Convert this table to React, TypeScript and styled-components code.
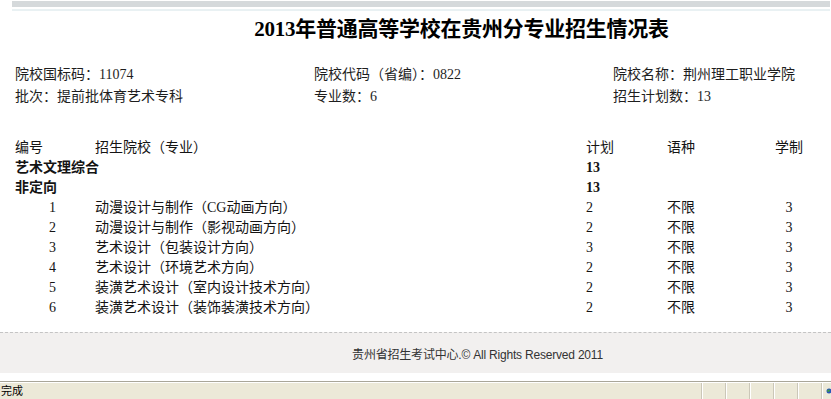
import React from "react";
import styled, { createGlobalStyle } from "styled-components";

const GlobalStyle = createGlobalStyle`
  html, body { margin: 0; padding: 0; background: #ffffff; overflow: hidden; }
  #root { width: 831px; height: 399px; }
`;

const Page = styled.div`
  width: 831px;
  height: 399px;
  display: flex;
  flex-direction: column;
  overflow: hidden;
  font-family: "Liberation Serif", "Noto Sans CJK SC", serif;
  color: #141414;
`;

const TopBar = styled.div`
  margin: 1px 1px 0 12px;
  height: 6px;
  background: #d5d9db;
`;

const TopLine = styled.div`
  margin: 2px 1px 0 12px;
  height: 2px;
  background: #e9f1f3;
`;

const Title = styled.h1`
  margin: 0;
  padding-left: 92px;
  height: 36px;
  line-height: 36px;
  text-align: center;
  font-size: 21px;
  font-weight: bold;
  font-family: "Liberation Serif", "Noto Sans CJK SC", serif;
  color: #000;
  letter-spacing: -0.25px;
`;

const InfoGrid = styled.div`
  margin-top: 17px;
  padding-left: 15px;
  display: grid;
  grid-template-columns: 299px 299px 1fr;
  grid-auto-rows: 22px;
  font-size: 14px;
  line-height: 22px;
  color: #1e1e1e;
`;

const Table = styled.div`
  margin-top: 30px;
  padding-left: 15px;
  display: grid;
  grid-template-columns: 80px 491px 81px 108px 28px;
  grid-auto-rows: 20px;
  font-size: 14px;
  line-height: 20px;
  color: #141414;
`;

const Cell = styled.div<{ $bold?: boolean; $align?: "left" | "center"; $pad?: number }>`
  white-space: nowrap;
  font-weight: ${(p) => (p.$bold ? "bold" : "normal")};
  text-align: ${(p) => p.$align ?? "left"};
  padding-left: ${(p) => p.$pad ?? 0}px;
`;

const Spacer = styled.div`
  flex: 0 0 14px;
`;

const Footer = styled.div`
  border-top: 1px dashed #c4c4c4;
  height: 40px;
  background: #f2f0ef;
  display: flex;
  align-items: center;
  justify-content: center;
  padding-left: 124px;
  font-family: "Liberation Sans", "Noto Sans CJK SC", sans-serif;
  font-size: 12px;
  color: #333;
  letter-spacing: -0.2px;
`;

const Gap = styled.div`
  height: 8px;
  background: #fff;
  border-bottom: 1px solid #a9a699;
`;

const StatusBar = styled.div`
  flex: 1;
  border-top: 1px solid #ffffff;
  background: #ece9d8;
  display: flex;
  font-family: "Noto Sans CJK SC", sans-serif;
  font-size: 11px;
  line-height: 15px;
  color: #000;
`;

const StatusText = styled.div`
  flex: 1;
  overflow: hidden;
  white-space: nowrap;
  padding-left: 1px;
`;

const Pane = styled.div<{ $w: number }>`
  width: ${(p) => p.$w}px;
  border-left: 1px solid #cbc7b8;
  box-shadow: inset 1px 0 0 #ffffff;
  display: flex;
  align-items: center;
  padding-left: 4px;
  box-sizing: border-box;
`;

type Row = { no: string; name: string; plan: string; lang: string; years: string };

const rows: Row[] = [
  { no: "1", name: "动漫设计与制作（CG动画方向）", plan: "2", lang: "不限", years: "3" },
  { no: "2", name: "动漫设计与制作（影视动画方向）", plan: "2", lang: "不限", years: "3" },
  { no: "3", name: "艺术设计（包装设计方向）", plan: "3", lang: "不限", years: "3" },
  { no: "4", name: "艺术设计（环境艺术方向）", plan: "2", lang: "不限", years: "3" },
  { no: "5", name: "装潢艺术设计（室内设计技术方向）", plan: "2", lang: "不限", years: "3" },
  { no: "6", name: "装潢艺术设计（装饰装潢技术方向）", plan: "2", lang: "不限", years: "3" },
];

export default function App() {
  return (
    <>
      <GlobalStyle />
      <Page>
        <TopBar />
        <TopLine />
        <Title>2013年普通高等学校在贵州分专业招生情况表</Title>
        <InfoGrid>
          <div>院校国标码：11074</div>
          <div>院校代码（省编）：0822</div>
          <div>院校名称：荆州理工职业学院</div>
          <div>批次：提前批体育艺术专科</div>
          <div>专业数：6</div>
          <div>招生计划数：13</div>
        </InfoGrid>
        <Table>
          <Cell>编号</Cell>
          <Cell>招生院校（专业）</Cell>
          <Cell>计划</Cell>
          <Cell>语种</Cell>
          <Cell $align="center">学制</Cell>

          <Cell $bold>艺术文理综合</Cell>
          <Cell />
          <Cell $bold>13</Cell>
          <Cell />
          <Cell />

          <Cell $bold>非定向</Cell>
          <Cell />
          <Cell $bold>13</Cell>
          <Cell />
          <Cell />

          {rows.map((r) => (
            <React.Fragment key={r.no}>
              <Cell $pad={34}>{r.no}</Cell>
              <Cell>{r.name}</Cell>
              <Cell>{r.plan}</Cell>
              <Cell>{r.lang}</Cell>
              <Cell $align="center">{r.years}</Cell>
            </React.Fragment>
          ))}
        </Table>
        <Spacer />
        <Footer>贵州省招生考试中心.© All Rights Reserved 2011</Footer>
        <Gap />
        <StatusBar>
          <StatusText>完成</StatusText>
          <Pane $w={24} />
          <Pane $w={24} />
          <Pane $w={24} />
          <Pane $w={24} />
          <Pane $w={24} />
          <Pane $w={10}>
            <svg width="10" height="12" viewBox="0 0 10 12">
              <circle cx="6" cy="6" r="5" fill="#2a56b8" />
              <path d="M3 4 Q6 2 8 5 Q6 8 3 8 Z" fill="#3fa33f" />
            </svg>
          </Pane>
        </StatusBar>
      </Page>
    </>
  );
}
